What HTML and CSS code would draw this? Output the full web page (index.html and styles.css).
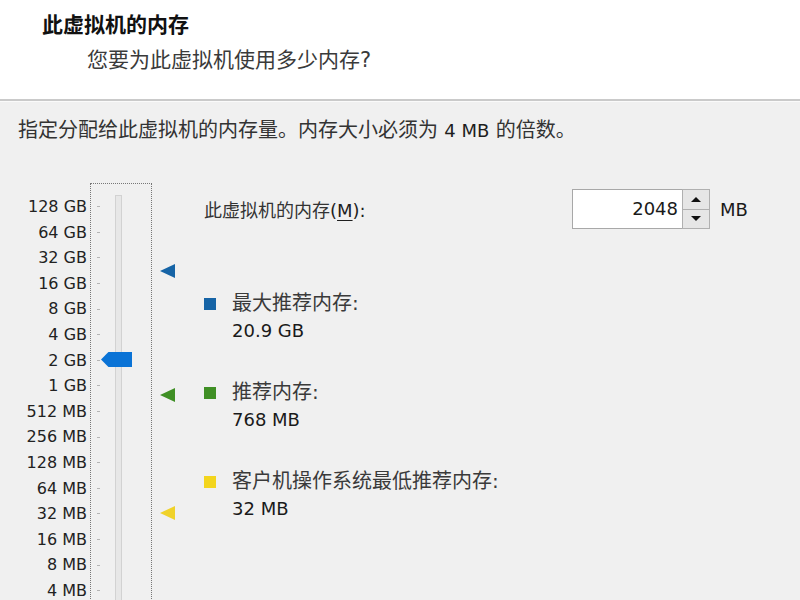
FILE: index.html
```
<!DOCTYPE html>
<html>
<head>
    <meta charset="utf-8">
    <title>内存</title>
    <link rel="stylesheet" href="styles.css">
</head>
<body>
    <div class="header">
        <div class="title">此虚拟机的内存</div>
        <div class="subtitle">您要为此虚拟机使用多少内存?</div>
    </div>

    <div class="main">
        <div class="intro">指定分配给此虚拟机的内存量。内存大小必须为 <span class="latin">4 MB</span> 的倍数。</div>

        <div class="content">
            <div class="labels">
                <div>128 GB</div>
                <div>64 GB</div>
                <div>32 GB</div>
                <div>16 GB</div>
                <div>8 GB</div>
                <div>4 GB</div>
                <div>2 GB</div>
                <div>1 GB</div>
                <div>512 MB</div>
                <div>256 MB</div>
                <div>128 MB</div>
                <div>64 MB</div>
                <div>32 MB</div>
                <div>16 MB</div>
                <div>8 MB</div>
                <div>4 MB</div>
            </div>

            <div class="slider">
                <div class="ticks">
                    <span></span><span></span><span></span><span></span>
                    <span></span><span></span><span></span><span></span>
                    <span></span><span></span><span></span><span></span>
                    <span></span><span></span><span></span><span></span>
                </div>
                <div class="track"></div>
                <div class="thumb"></div>
            </div>

            <div class="marks">
                <div class="mark blue" style="top: 81px"></div>
                <div class="mark green" style="top: 205px"></div>
                <div class="mark yellow" style="top: 323px"></div>
            </div>

            <div class="panel">
                <div class="mem-row">
                    <div class="mem-label">此虚拟机的内存<span class="latin">(<u>M</u>):</span></div>
                    <div class="spin">
                        <div class="spin-value">2048</div>
                        <div class="spin-btns">
                            <div class="spin-btn"><span class="arr up"></span></div>
                            <div class="spin-btn"><span class="arr down"></span></div>
                        </div>
                    </div>
                    <div class="unit">MB</div>
                </div>

                <div class="legend">
                    <div class="legend-item">
                        <div class="legend-title"><span class="sq blue"></span>最大推荐内存:</div>
                        <div class="legend-value">20.9 GB</div>
                    </div>
                    <div class="legend-item">
                        <div class="legend-title"><span class="sq green"></span>推荐内存:</div>
                        <div class="legend-value">768 MB</div>
                    </div>
                    <div class="legend-item">
                        <div class="legend-title"><span class="sq yellow"></span>客户机操作系统最低推荐内存:</div>
                        <div class="legend-value">32 MB</div>
                    </div>
                </div>
            </div>
        </div>
    </div>
</body>
</html>
```
FILE: styles.css
```
body {
    margin: 0;
    padding: 0;
    font-family: "DejaVu Sans", "Noto Sans CJK SC", sans-serif;
    color: #1e1e1e;
    background: #f0f0f0;
    overflow: hidden;
}
.header {
    background: #fff;
    height: 99px;
    border-bottom: 2px solid #cacaca;
}
.title {
    padding: 10px 0 0 42px;
    font-size: 21px;
    font-weight: bold;
    line-height: 30px;
    color: #111;
}
.subtitle {
    padding: 5px 0 0 87px;
    font-size: 21px;
    line-height: 30px;
    color: #3a3a3a;
}
.main {
    border-top: 1px solid #fafafa;
    padding: 13px 0 0 18px;
}
.intro {
    font-size: 20px;
    line-height: 30px;
    color: #333;
}
.latin {
    font-size: 18px;
    color: #1e1e1e;
}
.content {
    display: flex;
    margin-top: 37px;
}
.labels {
    width: 72px;
    padding: 11px 3px 0 0;
    box-sizing: border-box;
    text-align: right;
    font-size: 16px;
    line-height: 25.6px;
    color: #222;
}
.slider {
    position: relative;
    width: 62px;
    height: 440px;
    box-sizing: border-box;
    border: 1px dotted #777;
    display: flex;
}
.ticks {
    display: flex;
    flex-direction: column;
    padding: 10px 0 0 6px;
    width: 18px;
}
.ticks span {
    height: 25.6px;
    display: flex;
    align-items: center;
}
.ticks span::before {
    content: "";
    width: 3px;
    height: 1px;
    background: #b5b5b5;
}
.track {
    margin-top: 11px;
    width: 5px;
    height: 420px;
    background: #e7e7e7;
    border: 1px solid #d2d2d2;
}
.thumb {
    position: absolute;
    left: 10px;
    top: 168px;
    width: 31px;
    height: 15px;
    background: #0a73d6;
    clip-path: polygon(0 50%, 24% 0, 100% 0, 100% 100%, 24% 100%);
}
.marks {
    position: relative;
    width: 52px;
}
.mark {
    position: absolute;
    left: 8px;
    width: 0;
    height: 0;
    border-top: 7px solid transparent;
    border-bottom: 7px solid transparent;
    border-right: 15px solid #1664a6;
}
.mark.green { border-right-color: #3f8f25; }
.mark.yellow { border-right-color: #f0d22a; }
.panel {
    flex: 1;
}
.mem-row {
    display: flex;
    align-items: center;
    margin-top: 6px;
}
.mem-label {
    width: 368px;
    font-size: 18px;
    color: #333;
}
.mem-label u {
    text-underline-offset: 3px;
}
.spin {
    display: flex;
    height: 40px;
}
.spin-value {
    width: 110px;
    box-sizing: border-box;
    background: #fff;
    border: 1px solid #a8a8a8;
    border-right: none;
    text-align: right;
    padding-right: 4px;
    font-size: 18px;
    line-height: 38px;
    color: #1a1a1a;
}
.spin-btns {
    width: 28px;
    display: flex;
    flex-direction: column;
    border: 1px solid #b0b0b0;
    box-sizing: border-box;
}
.spin-btn {
    flex: 1;
    background: #e6e6e6;
    display: flex;
    align-items: center;
    justify-content: center;
}
.spin-btn + .spin-btn {
    border-top: 1px solid #b0b0b0;
}
.arr {
    width: 0;
    height: 0;
    border-left: 5px solid transparent;
    border-right: 5px solid transparent;
}
.arr.up { border-bottom: 5px solid #111; }
.arr.down { border-top: 5px solid #111; }
.unit {
    margin-left: 10px;
    font-size: 18px;
    color: #1a1a1a;
}
.legend {
    margin-top: 61px;
}
.legend-item + .legend-item {
    margin-top: 35px;
}
.legend-title {
    display: flex;
    align-items: center;
    font-size: 20px;
    line-height: 27px;
    color: #3a3a3a;
}
.sq {
    width: 12px;
    height: 12px;
    margin-right: 16px;
    background: #1664a6;
}
.sq.green { background: #3f8f25; }
.sq.yellow { background: #f3d51d; }
.legend-value {
    padding-left: 28px;
    font-size: 18px;
    line-height: 27px;
    color: #1a1a1a;
}
```
